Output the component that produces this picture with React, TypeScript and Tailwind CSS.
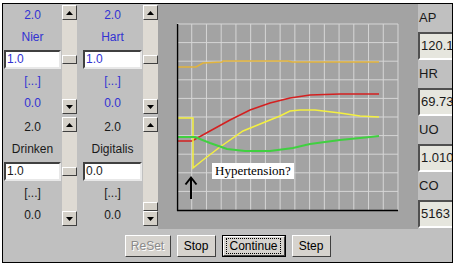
import React from 'react';

const sans = { fontFamily: '"Liberation Sans", Arial, sans-serif' };

function Arrow({ up }: { up?: boolean }) {
  return (
    <svg width="7" height="4" viewBox="0 0 7 4">
      {up ? <polygon points="0,4 7,4 3.5,0" fill="#000" /> : <polygon points="0,0 7,0 3.5,4" fill="#000" />}
    </svg>
  );
}

function ScrollBtn({ up }: { up?: boolean }) {
  return (
    <div className="h-[15px] w-[15px] shrink-0 flex items-center justify-center bg-[#d4d0c8] border border-t-white border-l-white border-b-[#404040] border-r-[#404040]">
      <Arrow up={up} />
    </div>
  );
}

function Scrollbar({ gap }: { gap: string }) {
  return (
    <div className="w-[15px] h-[109px] mt-[1px] flex flex-col bg-[#dedad3]">
      <ScrollBtn up />
      <div className="flex-1 flex flex-col">
        <div className={gap} />
        <div className="h-[9px] bg-[#d4d0c8] border border-t-white border-l-white border-b-[#404040] border-r-[#404040]" />
      </div>
      <ScrollBtn />
    </div>
  );
}

function Control({ label, value, color, gap, width }: { label: string; value: string; color: string; gap: string; width: string }) {
  return (
    <>
      <div className={`${width} flex flex-col text-[12px] ${color}`}>
        <div className="h-[22px] flex items-center justify-center">2.0</div>
        <div className="h-[22px] flex items-center justify-center">{label}</div>
        <div className="h-[22px] flex items-center px-[1px]">
          <div className="h-[19px] w-full bg-white border-2 border-t-[#404040] border-l-[#404040] border-b-[#e8e8e8] border-r-[#e8e8e8] flex items-center pl-[1px]">
            {value}
          </div>
        </div>
        <div className="h-[22px] flex items-center justify-center">[...]</div>
        <div className="h-[22px] flex items-center justify-center">0.0</div>
      </div>
      <Scrollbar gap={gap} />
    </>
  );
}

function Chart() {
  const vx: number[] = [];
  for (let i = 0; i <= 15; i++) vx.push(19 + (i * 221) / 15);
  const hy: number[] = [];
  for (let i = 0; i < 10; i++) hy.push(20 + (i * 186) / 10);
  const rel = (pts: number[][]) => pts.map(([x, y]) => `${x - 158},${y - 4}`).join(' ');
  return (
    <div className="w-[260px] h-[225px] bg-[#a3a3a3] relative">
      <svg width="260" height="225" className="block">
        {vx.map((x) => (
          <line key={'v' + x} x1={x} y1={20} x2={x} y2={206} stroke="#d6d6d6" strokeWidth="1" />
        ))}
        {hy.map((y) => (
          <line key={'h' + y} x1={19} y1={y} x2={240} y2={y} stroke="#d6d6d6" strokeWidth="1" />
        ))}
        <polyline
          fill="none"
          stroke="#e2b43c"
          strokeWidth="1.5"
          points={rel([[177, 67], [196, 67], [203, 63], [222, 62], [223, 61], [288, 61], [292, 62], [379, 62]])}
        />
        <polyline
          fill="none"
          stroke="#d42020"
          strokeWidth="1.5"
          points={rel([[177, 141], [192, 141], [210, 131], [230, 120], [250, 110], [270, 103], [290, 98], [310, 95], [340, 94], [379, 94]])}
        />
        <polyline
          fill="none"
          stroke="#f4f040"
          strokeWidth="1.5"
          points={rel([[177, 118], [193, 118], [193, 168], [203, 160], [220, 147], [243, 131], [270, 120], [280, 116], [290, 111], [300, 110], [315, 110], [340, 113], [360, 116], [379, 117]])}
        />
        <polyline
          fill="none"
          stroke="#40d040"
          strokeWidth="2"
          points={rel([[177, 137], [195, 137], [210, 143], [227, 149], [245, 151], [270, 151], [293, 148], [310, 144], [340, 140], [370, 137], [379, 136]])}
        />
        <line x1={19.5} y1={20} x2={19.5} y2={206.5} stroke="#000" strokeWidth="1.5" />
        <line x1={19} y1={206.5} x2={240} y2={206.5} stroke="#000" strokeWidth="1.5" />
        <line x1={33} y1={174} x2={33} y2={195} stroke="#000" strokeWidth="2" />
        <polyline points="27.5,180.5 33,173.5 38.5,180.5" fill="none" stroke="#000" strokeWidth="2" />
      </svg>
      <div
        className="absolute left-[54px] top-[159px] h-[16px] px-[3px] bg-white text-black text-[13px] leading-[16px]"
        style={{ fontFamily: '"Liberation Serif", "Times New Roman", serif' }}
      >
        Hypertension?
      </div>
    </div>
  );
}

function ReadOut({ label, value }: { label: string; value: string }) {
  return (
    <>
      <div className="h-[28px] flex items-center pl-[1px] text-[13px] text-[#1a1a1a]">{label}</div>
      <div className="h-[28px] w-[60px] bg-[#e6e6de] border-2 border-t-[#505050] border-l-[#505050] border-b-white border-r-white flex items-center pl-[1px] text-[13px] text-[#1a1a1a]">
        {value}
      </div>
    </>
  );
}

function Btn({ children, w, disabled, focus }: { children: string; w: string; disabled?: boolean; focus?: boolean }) {
  return (
    <div className={`${w} h-[22px] ${focus ? 'border border-black' : ''}`}>
      <div className="h-full w-full bg-[#d6d3ce] border border-t-white border-l-white border-b-[#404040] border-r-[#404040] flex items-center justify-center">
        <span
          className={`text-[12px] leading-[14px] px-[2px] ${disabled ? 'text-[#8a8a8a] [text-shadow:1px_1px_0_#fff]' : 'text-black'} ${
            focus ? 'outline outline-1 outline-dotted outline-black' : ''
          }`}
        >
          {children}
        </span>
      </div>
    </div>
  );
}

export default function App() {
  return (
    <div className="w-[456px] h-[267px] bg-white pt-[3px] pl-[2px]" style={sans}>
      <div className="w-[451px] h-[260px] border border-black bg-[#c0c0c0] flex flex-col overflow-hidden">
        <div className="flex h-[225px]">
          <div className="w-[155px] flex flex-col">
            <div className="h-[112px] flex">
              <Control label="Nier" value="1.0" color="text-[#3232d2]" gap="h-[35px]" width="w-[59px]" />
              <div className="w-[5px]" />
              <Control label="Hart" value="1.0" color="text-[#3232d2]" gap="h-[35px]" width="w-[61px]" />
            </div>
            <div className="h-[113px] flex">
              <Control label="Drinken" value="1.0" color="text-[#1a1a1a]" gap="h-[35px]" width="w-[59px]" />
              <div className="w-[5px]" />
              <Control label="Digitalis" value="0.0" color="text-[#1a1a1a]" gap="h-[70px]" width="w-[61px]" />
            </div>
          </div>
          <Chart />
          <div className="w-[34px] overflow-hidden flex flex-col">
            <ReadOut label="AP" value="120.1" />
            <ReadOut label="HR" value="69.73" />
            <ReadOut label="UO" value="1.010" />
            <ReadOut label="CO" value="5163" />
          </div>
        </div>
        <div className="flex justify-center gap-[6px] pt-[6px]">
          <Btn w="w-[46px]" disabled>ReSet</Btn>
          <Btn w="w-[39px]">Stop</Btn>
          <Btn w="w-[64px]" focus>Continue</Btn>
          <Btn w="w-[39px]">Step</Btn>
        </div>
      </div>
    </div>
  );
}
